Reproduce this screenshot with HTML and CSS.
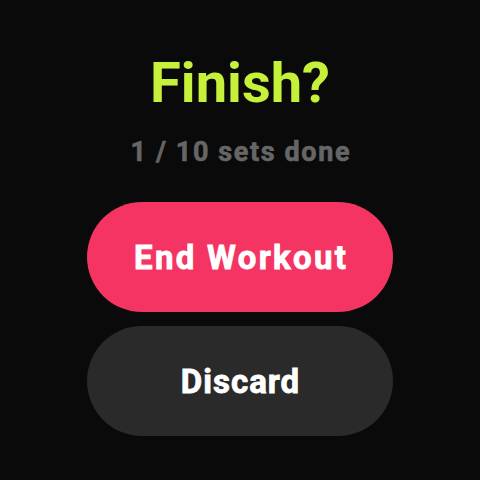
FILE: index.html
```html
<!DOCTYPE html>
<html>
<head>
<meta charset="utf-8">
<link rel="stylesheet" href="styles.css">
</head>
<body>
<main class="screen">
  <h1 class="title">Finish?</h1>
  <p class="subtitle">1 / 10 sets done</p>
  <div class="actions">
    <button class="btn btn-end">End Workout</button>
    <button class="btn btn-discard">Discard</button>
  </div>
</main>
</body>
</html>
```
FILE: styles.css
```css
html, body {
  margin: 0;
  padding: 0;
  background: #0a0a0a;
}
.screen {
  width: 480px;
  height: 480px;
  display: flex;
  flex-direction: column;
  align-items: center;
  font-family: Roboto, "Liberation Sans", sans-serif;
  font-weight: 700;
  box-sizing: border-box;
  padding-top: 55px;
}
.title {
  margin: 0;
  font-size: 56px;
  line-height: 1;
  font-weight: 700;
  color: #c6f13a;
}
.subtitle {
  margin: 28px 0 0;
  font-size: 27px;
  line-height: 1;
  letter-spacing: 1.6px;
  padding-left: 1.6px;
  color: #666666;
  -webkit-text-stroke: 0.6px #666666;
}
.actions {
  margin-top: 36px;
  display: flex;
  flex-direction: column;
  gap: 14px;
}
.btn {
  width: 306px;
  height: 110px;
  border: none;
  border-radius: 55px;
  font-family: Roboto, "Liberation Sans", sans-serif;
  font-weight: 700;
  font-size: 33px;
  line-height: 1;
  color: #ffffff;
  -webkit-text-stroke: 0.8px #ffffff;
  padding: 0;
}
.btn-end {
  background: #f43563;
  letter-spacing: 2.3px;
  padding-left: 2.3px;
}
.btn-discard {
  background: #2a2a2a;
  letter-spacing: 1px;
  padding-left: 1px;
}
```
